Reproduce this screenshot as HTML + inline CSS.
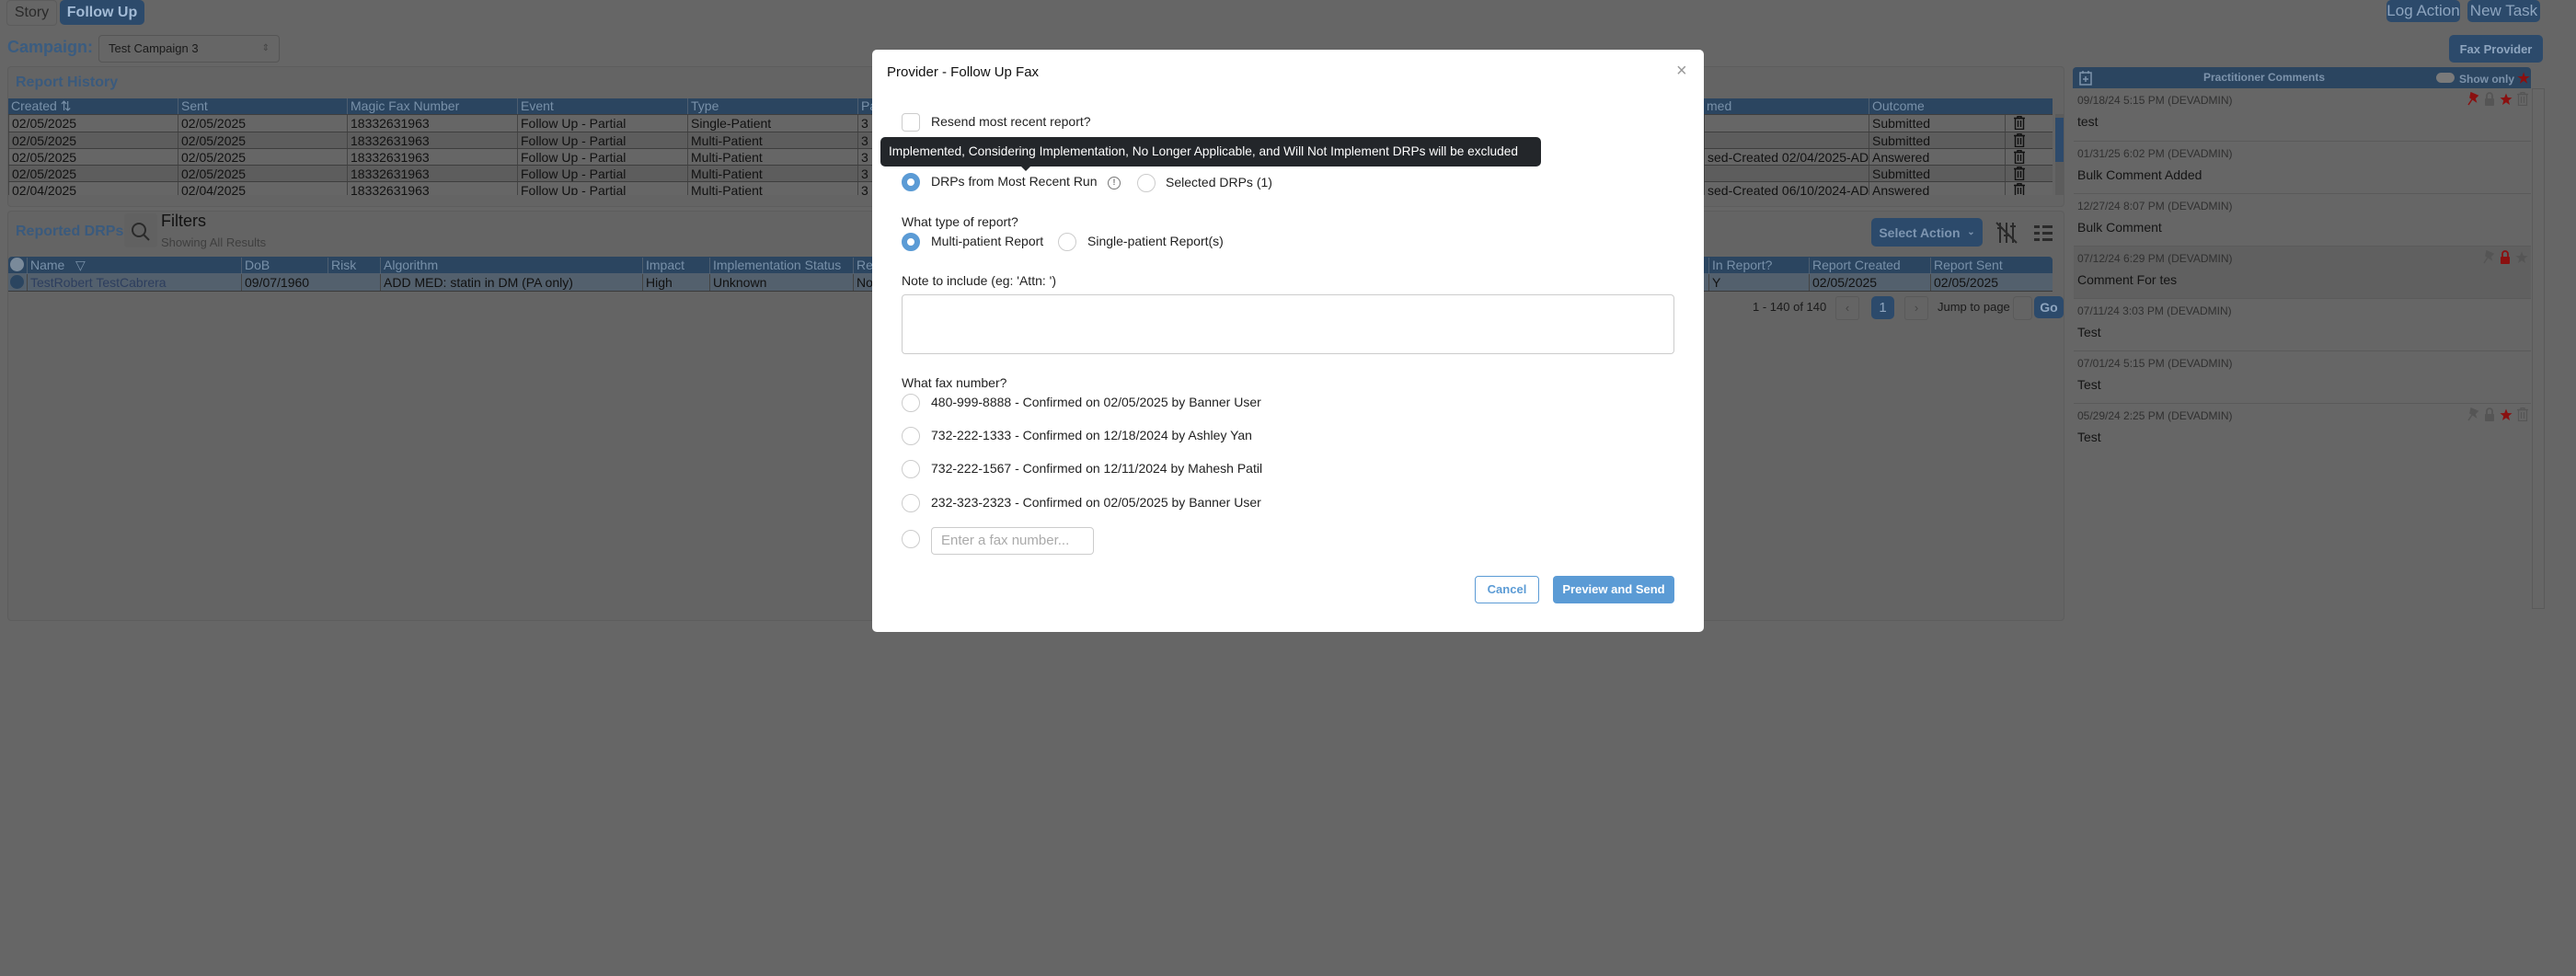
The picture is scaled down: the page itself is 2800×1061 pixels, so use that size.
<!DOCTYPE html>
<html><head><meta charset="utf-8">
<style>
*{box-sizing:border-box;margin:0;padding:0}
body{width:2800px;height:1061px;background:#666;position:relative;overflow:hidden;font-family:"Liberation Sans",Arial,sans-serif;color:#141414}
.a{position:absolute}
.btn{position:absolute;background:#2c4a6b;color:#8ea5bf;border-radius:5px;display:flex;align-items:center;justify-content:center;font-size:17px}
.hdr{position:absolute;background:#2b4560;color:#7d93ab;font-size:15px}
.cell{position:absolute;overflow:hidden;white-space:nowrap;font-size:14px;line-height:18px;padding-left:3px;border-left:1px solid #444;color:#111}
.hc{position:absolute;overflow:hidden;white-space:nowrap;font-size:14px;line-height:17px;padding-left:3px;border-left:1px solid #4d5e70;color:#7890a8}
.panel{position:absolute;border:1px solid #5d5d5d;border-radius:4px;background:#646464}
.m{position:absolute;font-size:14px;color:#222;white-space:nowrap}
.rad{position:absolute;width:20px;height:20px;border-radius:50%;border:1px solid #ccc;background:#fff}
.rad.on{border:6px solid #5b9bd5}
.cm{position:absolute;left:2254px;width:497px;height:57px;border-top:1px solid #5a5a5a}
.cd{position:absolute;left:4px;top:6px;font-size:12px;color:#303030}
.ct{position:absolute;left:4px;top:28px;font-size:14px;color:#141414}
</style></head><body>

<div class="a" style="left:7px;top:0;width:55px;height:28px;border:1px solid #5c5c5c;border-radius:4px;color:#2a2a2a;font-size:16px;display:flex;align-items:center;justify-content:center">Story</div>
<div class="btn" style="left:65px;top:0;width:92px;height:27px;color:#a3bbd6;font-weight:bold;font-size:16px">Follow Up</div>
<div class="a" style="left:8px;top:41px;font-size:18px;font-weight:bold;color:#3a5c80">Campaign:</div>
<div class="a" style="left:107px;top:38px;width:197px;height:30px;border:1px solid #555;border-radius:4px;font-size:13px;line-height:28px;padding-left:10px;color:#1a1a1a">Test Campaign 3<span style="position:absolute;right:10px;top:0;color:#444;font-size:10px">⇕</span></div>

<div class="btn" style="left:2594px;top:0;width:80px;height:24px;font-size:17px">Log Action</div>
<div class="btn" style="left:2682px;top:0;width:79px;height:24px;font-size:17px">New Task</div>
<div class="btn" style="left:2662px;top:38px;width:102px;height:30px;font-size:13px;font-weight:bold">Fax Provider</div>

<div class="panel" style="left:8px;top:72px;width:2236px;height:153px"></div>
<div class="a" style="left:17px;top:81px;font-size:16px;font-weight:bold;color:#3a5a7d">Report History</div>
<div class="hdr" style="left:9px;top:107px;width:2222px;height:17px"></div>
<div class="hc" style="left:9px;top:107px;width:184px;border:none">Created ⇅</div>
<div class="hc" style="left:193px;top:107px;width:184px">Sent</div>
<div class="hc" style="left:377px;top:107px;width:185px">Magic Fax Number</div>
<div class="hc" style="left:562px;top:107px;width:185px">Event</div>
<div class="hc" style="left:747px;top:107px;width:185px">Type</div>
<div class="hc" style="left:932px;top:107px;width:100px">Pa</div>
<div class="hc" style="left:1852px;top:107px;width:179px;border:none">med</div>
<div class="hc" style="left:2031px;top:107px;width:148px">Outcome</div>
<div class="hc" style="left:2179px;top:107px;width:52px"></div>

<div id="rh"></div>
<div class="a" style="left:2234px;top:124px;width:9px;height:88px;background:#5c5c5c"></div>
<div class="a" style="left:2234px;top:128px;width:9px;height:48px;background:#2d4a6b"></div>

<div class="panel" style="left:8px;top:229px;width:2236px;height:446px"></div>
<div class="a" style="left:17px;top:243px;font-size:16px;font-weight:bold;color:#3a5a7d">Reported DRPs</div>
<div class="a" style="left:135px;top:232px;width:36px;height:37px;background:#616161;border-radius:4px"></div>
<svg class="a" style="left:141px;top:240px" width="24" height="24" viewBox="0 0 24 24"><circle cx="10" cy="10" r="7" fill="none" stroke="#2a2a2a" stroke-width="2"/><line x1="15" y1="15" x2="21" y2="21" stroke="#2a2a2a" stroke-width="2"/></svg>
<div class="a" style="left:175px;top:230px;font-size:18px;color:#111">Filters</div>
<div class="a" style="left:175px;top:256px;font-size:13px;color:#3f3f3f">Showing All Results</div>
<div class="btn" style="left:2034px;top:237px;width:121px;height:31px;font-size:14px;font-weight:bold;color:#7d95b0">Select Action &nbsp;<span style="font-size:10px">⌄</span></div>
<svg class="a" style="left:2168px;top:240px" width="26" height="26" viewBox="0 0 26 26" fill="none" stroke="#2a2a2a" stroke-width="2"><line x1="6" y1="2" x2="6" y2="24"/><line x1="13" y1="2" x2="13" y2="24"/><line x1="20" y1="2" x2="20" y2="24"/><line x1="3" y1="8" x2="9" y2="8"/><line x1="10" y1="16" x2="16" y2="16"/><line x1="17" y1="6" x2="23" y2="6"/><line x1="2" y1="2" x2="24" y2="24"/></svg>
<svg class="a" style="left:2210px;top:243px" width="22" height="22" viewBox="0 0 22 22" fill="#2a2a2a"><rect x="1" y="2" width="6" height="3"/><rect x="10" y="2" width="11" height="3"/><rect x="1" y="9" width="6" height="3"/><rect x="10" y="9" width="11" height="3"/><rect x="1" y="16" width="6" height="3"/><rect x="10" y="16" width="11" height="3"/></svg>

<div class="hdr" style="left:9px;top:279px;width:2222px;height:18px;border-radius:4px 4px 0 0"></div>
<div class="a" style="left:9px;top:297px;width:2222px;height:20px;background:#53606d;border-bottom:1px solid #3a3a3a"></div>
<div class="a" style="left:11px;top:280px;width:15px;height:15px;border-radius:50%;background:#7a8a9a"></div>
<div class="a" style="left:11px;top:299px;width:15px;height:15px;border-radius:50%;background:#2b4560"></div>
<div class="hc" style="left:29px;top:280px;width:233px">Name &nbsp;&nbsp;▽</div>
<div class="hc" style="left:262px;top:280px;width:94px">DoB</div>
<div class="hc" style="left:356px;top:280px;width:57px">Risk</div>
<div class="hc" style="left:413px;top:280px;width:285px">Algorithm</div>
<div class="hc" style="left:698px;top:280px;width:73px">Impact</div>
<div class="hc" style="left:771px;top:280px;width:156px">Implementation Status</div>
<div class="hc" style="left:927px;top:280px;width:100px">Res</div>
<div class="hc" style="left:1857px;top:280px;width:109px">In Report?</div>
<div class="hc" style="left:1966px;top:280px;width:132px">Report Created</div>
<div class="hc" style="left:2098px;top:280px;width:133px">Report Sent</div>
<div class="cell" style="left:29px;top:298px;width:233px;color:#2d3e5e">TestRobert TestCabrera</div>
<div class="cell" style="left:262px;top:298px;width:94px">09/07/1960</div>
<div class="cell" style="left:356px;top:298px;width:57px"></div>
<div class="cell" style="left:413px;top:298px;width:285px">ADD MED: statin in DM (PA only)</div>
<div class="cell" style="left:698px;top:298px;width:73px">High</div>
<div class="cell" style="left:771px;top:298px;width:156px">Unknown</div>
<div class="cell" style="left:927px;top:298px;width:100px">Not</div>
<div class="cell" style="left:1857px;top:298px;width:109px">Y</div>
<div class="cell" style="left:1966px;top:298px;width:132px">02/05/2025</div>
<div class="cell" style="left:2098px;top:298px;width:133px">02/05/2025</div>

<div class="a" style="left:1905px;top:326px;font-size:13px;color:#1a1a1a">1 - 140 of 140</div>
<div class="a" style="left:1995px;top:322px;width:26px;height:26px;border:1px solid #5a5a5a;border-radius:3px;color:#444;font-size:13px;text-align:center;line-height:24px">‹</div>
<div class="btn" style="left:2034px;top:322px;width:25px;height:25px;font-size:15px">1</div>
<div class="a" style="left:2070px;top:322px;width:26px;height:26px;border:1px solid #5a5a5a;border-radius:3px;color:#444;font-size:13px;text-align:center;line-height:24px">›</div>
<div class="a" style="left:2106px;top:326px;font-size:13px;color:#1a1a1a">Jump to page</div>
<div class="a" style="left:2188px;top:322px;width:21px;height:26px;border:1px solid #5a5a5a;border-radius:4px"></div>
<div class="btn" style="left:2211px;top:322px;width:32px;height:24px;font-size:14px;font-weight:bold">Go</div>

<div class="a" style="left:2253px;top:73px;width:498px;height:23px;background:#2b4560;border-radius:4px 4px 0 0"></div>
<svg class="a" style="left:2260px;top:76px" width="14" height="17" viewBox="0 0 14 17" fill="none" stroke="#7d93ab" stroke-width="1.5"><rect x="1" y="3" width="12" height="13"/><line x1="4" y1="1" x2="4" y2="4"/><line x1="10" y1="1" x2="10" y2="4"/><line x1="7" y1="7" x2="7" y2="13"/><line x1="4" y1="10" x2="10" y2="10"/></svg>
<div class="a" style="left:2395px;top:77px;font-size:12px;font-weight:bold;color:#7d93ab">Practitioner Comments</div>
<div class="a" style="left:2648px;top:79px;width:20px;height:11px;border-radius:6px;background:#7a7a7a"></div>
<div class="a" style="left:2673px;top:76px;font-size:12px;font-weight:bold;color:#7d93ab">Show only <span style="color:#8a1010;font-size:15px">★</span></div>
<div class="a" style="left:2752px;top:96px;width:14px;height:566px;border:1px solid #5a5a5a"></div>
<div id="cms"></div>

<div class="a" style="left:948px;top:54px;width:904px;height:633px;background:#fff;border-radius:5px"></div>
<div class="m" style="left:964px;top:70px;font-size:15px;color:#111">Provider - Follow Up Fax</div>
<div class="m" style="left:1822px;top:66px;font-size:20px;color:#999">×</div>
<div class="a" style="left:980px;top:123px;width:20px;height:20px;border:1px solid #ccc;border-radius:4px"></div>
<div class="m" style="left:1012px;top:124px">Resend most recent report?</div>
<div class="m" style="left:980px;top:166px;color:#555">Which DRPs?</div>
<div class="a" style="left:957px;top:149px;width:718px;height:32px;background:#23262a;border-radius:5px"></div>
<div class="a" style="left:1109px;top:180px;width:0;height:0;border-left:6px solid transparent;border-right:6px solid transparent;border-top:6px solid #23262a"></div>
<div class="m" style="left:966px;top:157px;color:#fff;font-size:13.7px">Implemented, Considering Implementation, No Longer Applicable, and Will Not Implement DRPs will be excluded</div>
<div class="rad on" style="left:980px;top:188px"></div>
<div class="m" style="left:1012px;top:189px">DRPs from Most Recent Run</div>
<div class="a" style="left:1204px;top:192px;width:14px;height:14px;border:1.5px solid #777;border-radius:50%;font-size:9px;color:#777;text-align:center;line-height:11px;font-weight:bold">!</div>
<div class="rad" style="left:1236px;top:189px"></div>
<div class="m" style="left:1267px;top:190px">Selected DRPs (1)</div>
<div class="m" style="left:980px;top:233px">What type of report?</div>
<div class="rad on" style="left:980px;top:253px"></div>
<div class="m" style="left:1012px;top:254px">Multi-patient Report</div>
<div class="rad" style="left:1150px;top:253px"></div>
<div class="m" style="left:1182px;top:254px">Single-patient Report(s)</div>
<div class="m" style="left:980px;top:297px">Note to include (eg: 'Attn: ')</div>
<div class="a" style="left:980px;top:320px;width:840px;height:65px;border:1px solid #ccc;border-radius:4px"></div>
<div class="m" style="left:980px;top:408px">What fax number?</div>
<div class="rad" style="left:980px;top:428px"></div><div class="m" style="left:1012px;top:429px">480-999-8888 - Confirmed on 02/05/2025 by Banner User</div>
<div class="rad" style="left:980px;top:464px"></div><div class="m" style="left:1012px;top:465px">732-222-1333 - Confirmed on 12/18/2024 by Ashley Yan</div>
<div class="rad" style="left:980px;top:500px"></div><div class="m" style="left:1012px;top:501px">732-222-1567 - Confirmed on 12/11/2024 by Mahesh Patil</div>
<div class="rad" style="left:980px;top:537px"></div><div class="m" style="left:1012px;top:538px">232-323-2323 - Confirmed on 02/05/2025 by Banner User</div>
<div class="rad" style="left:980px;top:576px"></div>
<div class="a" style="left:1012px;top:573px;width:177px;height:30px;border:1px solid #ccc;border-radius:4px;font-size:15px;color:#aaa;line-height:28px;padding-left:10px">Enter a fax number...</div>
<div class="a" style="left:1603px;top:626px;width:70px;height:30px;border:1px solid #5b9bd5;border-radius:4px;color:#5b9bd5;font-size:13px;font-weight:bold;text-align:center;line-height:28px">Cancel</div>
<div class="a" style="left:1688px;top:626px;width:132px;height:30px;background:#5b9bd5;border-radius:4px;color:#fff;font-size:13px;font-weight:bold;text-align:center;line-height:30px">Preview and Send</div>

<script>
var rows=[["02/05/2025","02/05/2025","Single-Patient","","Submitted"],["02/05/2025","02/05/2025","Multi-Patient","","Submitted"],["02/05/2025","02/05/2025","Multi-Patient","sed-Created 02/04/2025-ADD MED","Answered"],["02/05/2025","02/05/2025","Multi-Patient","","Submitted"],["02/04/2025","02/04/2025","Multi-Patient","sed-Created 06/10/2024-ADD MED","Answered"]];
var h="";var tops=[124,143,161,179,197];
rows.forEach(function(r,i){var t=tops[i],hh=(i==4?15:(tops[i+1]-t));
var bg=i%2?"#5d5d5d":"#666";
h+='<div class="a" style="left:9px;top:'+t+'px;width:2222px;height:'+hh+'px;background:'+bg+';border-top:1px solid #3e3e3e;overflow:hidden"></div>';
var c=[[9,184,r[0]],[193,184,r[1]],[377,185,"18332631963"],[562,185,"Follow Up - Partial"],[747,185,r[2]],[932,100,"3"],[1852,179,r[3]],[2031,148,r[4]]];
c.forEach(function(x){h+='<div class="cell" style="left:'+x[0]+'px;top:'+(t+1)+'px;width:'+x[1]+'px;height:'+(hh-1)+'px">'+x[2]+'</div>';});
h+='<div class="cell" style="left:2179px;top:'+(t+1)+'px;width:52px;height:'+(hh-1)+'px"><svg style="position:absolute;left:9px;top:1px" width="12" height="15" viewBox="0 0 12 15" fill="none" stroke="#111" stroke-width="1.4"><line x1="0" y1="2.5" x2="12" y2="2.5"/><rect x="4" y="0.5" width="4" height="2"/><rect x="1.5" y="2.5" width="9" height="12"/><line x1="4.5" y1="5" x2="4.5" y2="12"/><line x1="7.5" y1="5" x2="7.5" y2="12"/></svg></div>';
});
document.getElementById("rh").outerHTML=h;
var R="#8a1010",G="#555";
function pin(c){return '<svg width="13" height="15" viewBox="0 0 13 15"><path d="M4 1 L11 4 L8 7 L9 10 L3 6 Z M5 8 L1 14" fill="'+c+'" stroke="'+c+'" stroke-width="1.5"/></svg>';}
function lock(c){return '<svg width="12" height="15" viewBox="0 0 12 15"><path d="M3 7 V4 a3 3 0 0 1 6 0 V7" fill="none" stroke="'+c+'" stroke-width="1.8"/><rect x="1" y="7" width="10" height="8" rx="1" fill="'+c+'"/></svg>';}
function star(c){return '<svg width="14" height="14" viewBox="0 0 14 14"><path d="M7 0.5 L8.8 5 L13.5 5.2 L9.8 8.2 L11 13 L7 10.3 L3 13 L4.2 8.2 L0.5 5.2 L5.2 5 Z" fill="'+c+'"/></svg>';}
function trash(c){return '<svg width="12" height="15" viewBox="0 0 12 15" fill="none" stroke="'+c+'" stroke-width="1.2"><line x1="0" y1="2.5" x2="12" y2="2.5"/><rect x="4" y="0.5" width="4" height="2"/><rect x="1.5" y="2.5" width="9" height="12"/><line x1="4.5" y1="5" x2="4.5" y2="12"/><line x1="7.5" y1="5" x2="7.5" y2="12"/></svg>';}
var cm=[["09/18/24 5:15 PM (DEVADMIN)","test",1],["01/31/25 6:02 PM (DEVADMIN)","Bulk Comment Added",0],["12/27/24 8:07 PM (DEVADMIN)","Bulk Comment",0],["07/12/24 6:29 PM (DEVADMIN)","Comment For tes",2],["07/11/24 3:03 PM (DEVADMIN)","Test",0],["07/01/24 5:15 PM (DEVADMIN)","Test",0],["05/29/24 2:25 PM (DEVADMIN)","Test",3]];
var g="";
cm.forEach(function(c,i){var t=96+i*57;var bg=i==3?"background:#606060;":"";
var ic="";
if(c[2]==1)ic=pin(R)+lock(G)+star(R)+trash(G);
if(c[2]==2)ic=pin(G)+lock(R)+star(G);
if(c[2]==3)ic=pin(G)+lock(G)+star(R)+trash(G);
g+='<div class="cm" style="top:'+t+'px;'+bg+(i==0?"border-top:none;":"")+'"><div class="cd">'+c[0]+'</div><div class="ct">'+c[1]+'</div><div style="position:absolute;right:3px;top:4px;display:flex;gap:5px;align-items:center">'+ic+'</div></div>';});
document.getElementById("cms").outerHTML=g;
</script>
</body></html>
